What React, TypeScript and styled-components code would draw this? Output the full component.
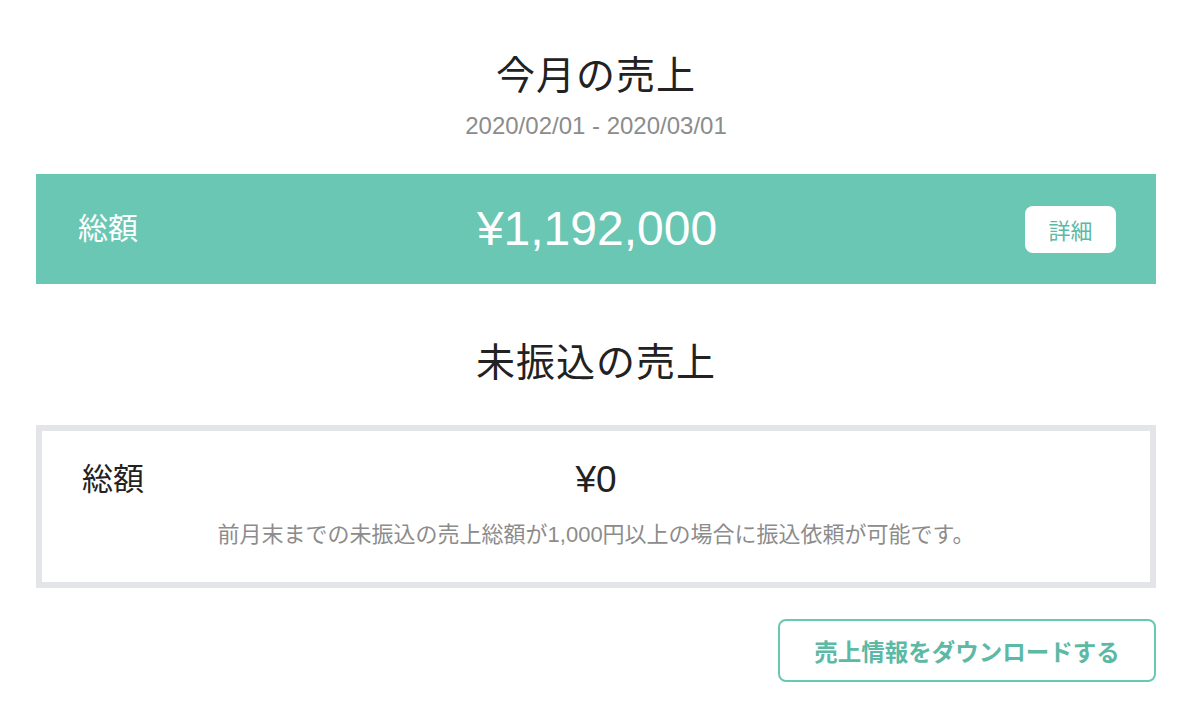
import React from "react";
import styled, { createGlobalStyle } from "styled-components";

const GlobalStyle = createGlobalStyle`
  html, body {
    margin: 0;
    padding: 0;
    background: #ffffff;
  }
  body {
    font-family: "Liberation Sans", "Noto Sans CJK JP", sans-serif;
    color: #222222;
  }
  * { box-sizing: border-box; }
`;

const GREEN = "#69c7b4";
const GREEN_TEXT = "#5cb9a5";

const Page = styled.div`
  width: 1200px;
  padding: 57px 44px 0 36px;
  display: flex;
  flex-direction: column;
`;

const Heading = styled.h2<{ $top?: number }>`
  margin: ${(p) => p.$top ?? 0}px 0 0;
  font-size: 39px;
  line-height: 38px;
  font-weight: 400;
  text-align: center;
  color: #222222;
  letter-spacing: 1px;
`;

const Period = styled.div`
  margin-top: 19px;
  font-size: 24px;
  line-height: 24px;
  color: #8c8c8c;
  text-align: center;
`;

const TotalBar = styled.section`
  margin-top: 36px;
  height: 110px;
  background: ${GREEN};
  display: grid;
  grid-template-columns: 1fr auto 1fr;
  align-items: center;
  padding: 0 40px 0 42px;
  color: #ffffff;
`;

const Label = styled.div<{ $dark?: boolean }>`
  font-size: ${(p) => (p.$dark ? 31 : 30)}px;
  line-height: 30px;
  color: ${(p) => (p.$dark ? "#222222" : "#ffffff")};
`;

const BigAmount = styled.div`
  font-size: 48px;
  line-height: 48px;
  text-align: center;
  color: #ffffff;
`;

const DetailButton = styled.button`
  justify-self: end;
  width: 91px;
  height: 47px;
  border: none;
  border-radius: 8px;
  background: #ffffff;
  color: ${GREEN_TEXT};
  font-family: "Liberation Sans", "Noto Sans CJK JP", sans-serif;
  font-size: 22px;
  cursor: pointer;
`;

const PendingBox = styled.section`
  margin-top: 43px;
  height: 163px;
  border: 6px solid #e3e5e8;
  padding: 32px 0 0 40px;
  display: flex;
  flex-direction: column;
`;

const PendingRow = styled.div`
  display: grid;
  grid-template-columns: 1fr auto 1fr;
  align-items: center;
  padding-right: 40px;
`;

const SmallAmount = styled.div`
  font-size: 37px;
  line-height: 34px;
  text-align: center;
  color: #222222;
`;

const Note = styled.p`
  margin: 27px 40px 0 0;
  font-size: 22px;
  line-height: 22px;
  color: #8c8c8c;
  text-align: center;
`;

const Footer = styled.div`
  margin-top: 31px;
  display: flex;
  justify-content: flex-end;
`;

const DownloadButton = styled.button`
  width: 378px;
  height: 63px;
  border: 2px solid ${GREEN};
  border-radius: 8px;
  background: #ffffff;
  color: ${GREEN_TEXT};
  font-family: "Liberation Sans", "Noto Sans CJK JP", sans-serif;
  font-size: 23.5px;
  font-weight: 700;
  cursor: pointer;
`;

export default function App() {
  return (
    <>
      <GlobalStyle />
      <Page>
        <Heading>今月の売上</Heading>
        <Period>2020/02/01 - 2020/03/01</Period>
        <TotalBar>
          <Label>総額</Label>
          <BigAmount>¥1,192,000</BigAmount>
          <DetailButton>詳細</DetailButton>
        </TotalBar>
        <Heading $top={60}>未振込の売上</Heading>
        <PendingBox>
          <PendingRow>
            <Label $dark>総額</Label>
            <SmallAmount>¥0</SmallAmount>
            <span />
          </PendingRow>
          <Note>前月末までの未振込の売上総額が1,000円以上の場合に振込依頼が可能です。</Note>
        </PendingBox>
        <Footer>
          <DownloadButton>売上情報をダウンロードする</DownloadButton>
        </Footer>
      </Page>
    </>
  );
}
